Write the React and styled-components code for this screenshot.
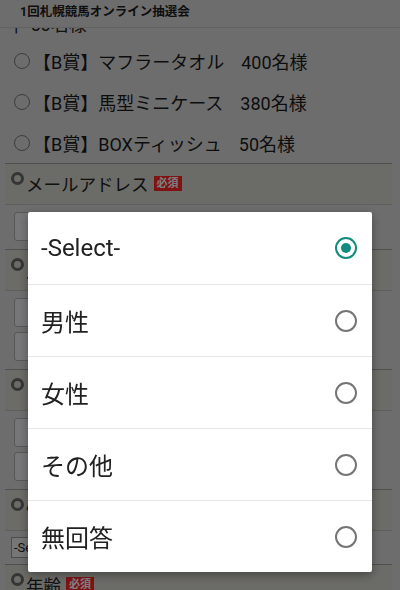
import React, { useState } from "react";
import styled, { createGlobalStyle } from "styled-components";

const GlobalStyle = createGlobalStyle`
  html, body {
    margin: 0;
    padding: 0;
  }
  body {
    font-family: Roboto, "Noto Sans CJK JP", sans-serif;
    color: #222;
  }
`;

const Page = styled.div`
  width: 400px;
  height: 590px;
  overflow: hidden;
  background: #dadada;
  display: flex;
  flex-direction: column;
`;

const Header = styled.header`
  flex: 0 0 28px;
  box-sizing: border-box;
  display: flex;
  align-items: center;
  padding: 0 0 6px 20px;
  border-bottom: 1px solid #c4c4c4;
  font-size: 12.5px;
  font-weight: bold;
  color: #1e1e1e;
  position: relative;
  z-index: 1;
  background: #dadada;
`;

const Body = styled.div`
  flex: 1;
  overflow: hidden;
`;

const PartialLine = styled.div`
  height: 7px;
  overflow: hidden;
`;

const PartialText = styled.div`
  margin-top: -13px;
  line-height: 20px;
  font-size: 18px;
  display: flex;
  gap: 12px;
  padding-left: 14px;
`;

const PrizeList = styled.div`
  padding-top: 5px;
`;

const PrizeRow = styled.label`
  height: 41px;
  display: flex;
  align-items: center;
  gap: 3px;
  padding-left: 14px;
  font-size: 18px;
  color: #1a1a1a;
`;

const PrizeRadio = styled.span`
  width: 14px;
  height: 14px;
  border-radius: 50%;
  border: 1.5px solid #7a7a7a;
  flex: 0 0 auto;
`;

const Amount = styled.span`
  margin-left: 17px;
`;

const Section = styled.section`
  margin: 0 8px 0 5px;
  border-top: 1px solid #9e9e9e;
`;

const SectionHead = styled.div`
  height: 40px;
  display: flex;
  align-items: flex-start;
  gap: 2px;
  padding-left: 6px;
  background: #d7d6ce;
  border-bottom: 1px solid #bebebe;
  font-size: 17.5px;
`;

const HeadIcon = styled.span`
  margin-top: 8px;
  width: 7px;
  height: 7px;
  border-radius: 50%;
  border: 3px solid #6a6a6a;
  flex: 0 0 auto;
`;

const HeadLabel = styled.span`
  margin-top: 9px;
  line-height: 24px;
  display: flex;
  align-items: center;
  gap: 5px;
`;

const Badge = styled.span`
  background: #ff2626;
  color: #fff;
  font-size: 11px;
  font-weight: bold;
  line-height: 15px;
  padding: 0 3px;
  margin-top: -3px;
`;

const Fields = styled.div`
  display: flex;
  flex-direction: column;
  gap: 5px;
  padding: ${(p) => (p.$tight ? "6px 0 6px 6px" : "7px 0 8px 9px")};
`;

const TextBox = styled.div`
  width: 330px;
  height: 27px;
  border: 1px solid #b0b0b0;
  border-radius: 3px;
  background: #ececf2;
`;

const SelectBox = styled.div`
  width: 90px;
  height: 19px;
  border: 1px solid #9a9a9a;
  background: #ececec;
  font-size: 13px;
  line-height: 19px;
  padding-left: 2px;
`;

const Overlay = styled.div`
  position: fixed;
  inset: 0;
  background: rgba(0, 0, 0, 0.5);
  display: flex;
  justify-content: center;
  align-items: flex-start;
  padding-top: 212px;
  z-index: 5;
`;

const Dialog = styled.div`
  width: 344px;
  background: #fff;
  border-radius: 2px;
  box-shadow: 0 3px 10px rgba(0, 0, 0, 0.35);
  overflow: hidden;
`;

const Option = styled.div`
  height: 72px;
  display: flex;
  align-items: center;
  justify-content: space-between;
  padding: 0 15px 0 13px;
  box-sizing: border-box;
  font-size: 24px;
  color: #212121;
  & + & {
    border-top: 1px solid #e6e6e6;
  }
`;

const Radio = styled.span`
  width: 22px;
  height: 22px;
  box-sizing: border-box;
  border-radius: 50%;
  border: 2px solid ${(p) => (p.$on ? "#128c7e" : "#757575")};
  display: flex;
  align-items: center;
  justify-content: center;
  &::after {
    content: "";
    width: 10px;
    height: 10px;
    border-radius: 50%;
    background: #128c7e;
    display: ${(p) => (p.$on ? "block" : "none")};
  }
`;

const prizes = [
  ["【B賞】マフラータオル", "400名様"],
  ["【B賞】馬型ミニケース", "380名様"],
  ["【B賞】BOXティッシュ", "50名様"],
];

const sections = [
  { label: "メールアドレス", fields: 1 },
  { label: "氏名", fields: 2 },
  { label: "フリガナ", fields: 2 },
  { label: "性別", select: true },
  { label: "年齢", fields: 0 },
];

const options = ["-Select-", "男性", "女性", "その他", "無回答"];

export default function App() {
  const [selected, setSelected] = useState(0);

  return (
    <>
      <GlobalStyle />
      <Page>
        <Header>1回札幌競馬オンライン抽選会</Header>
        <Body>
          <PartialLine>
            <PartialText>
              <span>|</span>
              <span>50名様</span>
            </PartialText>
          </PartialLine>
          <PrizeList>
            {prizes.map(([name, count]) => (
              <PrizeRow key={name}>
                <PrizeRadio />
                <span>
                  {name}
                  <Amount>{count}</Amount>
                </span>
              </PrizeRow>
            ))}
          </PrizeList>

          {sections.map((s) => (
            <Section key={s.label}>
              <SectionHead>
                <HeadIcon />
                <HeadLabel>
                  {s.label}
                  <Badge>必須</Badge>
                </HeadLabel>
              </SectionHead>
              {s.select && (
                <Fields $tight>
                  <SelectBox>-Select-</SelectBox>
                </Fields>
              )}
              {s.fields > 0 && (
                <Fields>
                  {Array.from({ length: s.fields }, (_, i) => (
                    <TextBox key={i} />
                  ))}
                </Fields>
              )}
            </Section>
          ))}
        </Body>
      </Page>

      <Overlay>
        <Dialog>
          {options.map((o, i) => (
            <Option key={o} onClick={() => setSelected(i)}>
              <span>{o}</span>
              <Radio $on={selected === i} />
            </Option>
          ))}
        </Dialog>
      </Overlay>
    </>
  );
}
